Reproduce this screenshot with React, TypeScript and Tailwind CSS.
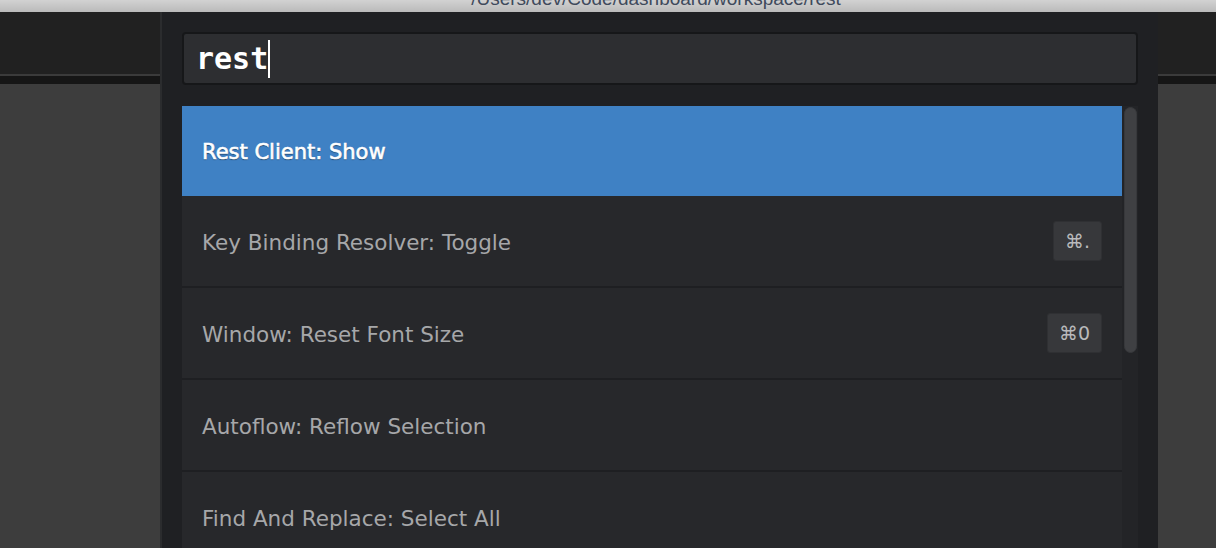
import React from "react";

const items = [
  { label: "Rest Client: Show", keys: "", selected: true },
  { label: "Key Binding Resolver: Toggle", keys: "⌘." },
  { label: "Window: Reset Font Size", keys: "⌘0" },
  { label: "Autoflow: Reflow Selection", keys: "" },
  { label: "Find And Replace: Select All", keys: "" },
];

function SidePane() {
  return (
    <div className="flex flex-col h-full">
      <div className="h-[62px] shrink-0 bg-[#212121]"></div>
      <div className="h-[2px] shrink-0 bg-[#3b3b3b]"></div>
      <div className="h-[8px] shrink-0 bg-[#161616]"></div>
      <div className="flex-1 bg-[#3d3d3d]"></div>
    </div>
  );
}

export default function App() {
  return (
    <div className="w-[1216px] h-[548px] overflow-hidden flex flex-col bg-[#1f2023]">
      {/* Title bar, mostly cut off */}
      <div className="h-[12px] shrink-0 overflow-hidden bg-gradient-to-b from-[#d2d2d2] to-[#bababa] flex justify-center">
        <span
          className="text-[19px] leading-[19px] text-[#3f4a5c] -mt-[11px] pl-[96px] whitespace-nowrap"
          style={{ fontFamily: '"Liberation Sans", Arial, sans-serif' }}
        >
          /Users/dev/Code/dashboard/workspace/rest
        </span>
      </div>

      <div className="flex-1 min-h-0 flex overflow-hidden">
        {/* Left editor pane */}
        <div className="w-[160px] shrink-0">
          <SidePane />
        </div>

        {/* Command palette */}
        <div className="w-[998px] shrink-0 bg-[#1f2023] border-l-2 border-[#2b2c2e] pt-[20px] pl-[20px] pr-[20px] flex flex-col overflow-hidden">
          <div className="h-[53px] shrink-0 rounded-[4px] border-2 border-[#161719] bg-[#2d2e31] flex items-center pl-[12px]">
            <span
              className="text-[30px] text-white leading-none font-bold"
              style={{ fontFamily: '"DejaVu Sans Mono", Menlo, monospace' }}
            >
              rest
            </span>
            <span className="w-[2px] h-[38px] bg-white"></span>
          </div>

          <div className="mt-[21px] flex flex-1">
            <div className="w-[940px] flex flex-col">
              {items.map((item, i) => (
                <div
                  key={i}
                  className={
                    item.selected
                      ? "h-[90px] shrink-0 bg-[#3f81c4] flex items-center px-[20px]"
                      : "h-[92px] shrink-0 bg-[#27282b] border-b-2 border-[#1e1f22] flex items-center justify-between px-[20px]"
                  }
                  style={{ fontFamily: '"DejaVu Sans", "Lucida Grande", sans-serif' }}
                >
                  <span
                    className={
                      item.selected
                        ? "pt-[3px] text-[21px] text-white [-webkit-text-stroke:0.6px_white] [text-shadow:0_1px_1px_rgba(0,0,0,0.5)]"
                        : "pt-[5px] text-[21.5px] text-[#a6a7a9]"
                    }
                  >
                    {item.label}
                  </span>
                  {item.keys && (
                    <span
                      className="h-[40px] px-[11px] flex items-center justify-center gap-[2px] rounded-[3px] bg-[#37383b] border border-[#2f3033] text-[19px] text-[#b9babc]"
                      style={{ fontFamily: '"DejaVu Sans", sans-serif' }}
                    >
                      {item.keys}
                    </span>
                  )}
                </div>
              ))}
            </div>
            {/* Scrollbar */}
            <div className="w-[16px] bg-[#232427] flex justify-center pt-[1px]">
              <div className="w-[13px] h-[246px] rounded-full bg-[#3f4043] border border-[#37383b]"></div>
            </div>
          </div>
        </div>

        {/* Right editor pane */}
        <div className="flex-1">
          <SidePane />
        </div>
      </div>
    </div>
  );
}
